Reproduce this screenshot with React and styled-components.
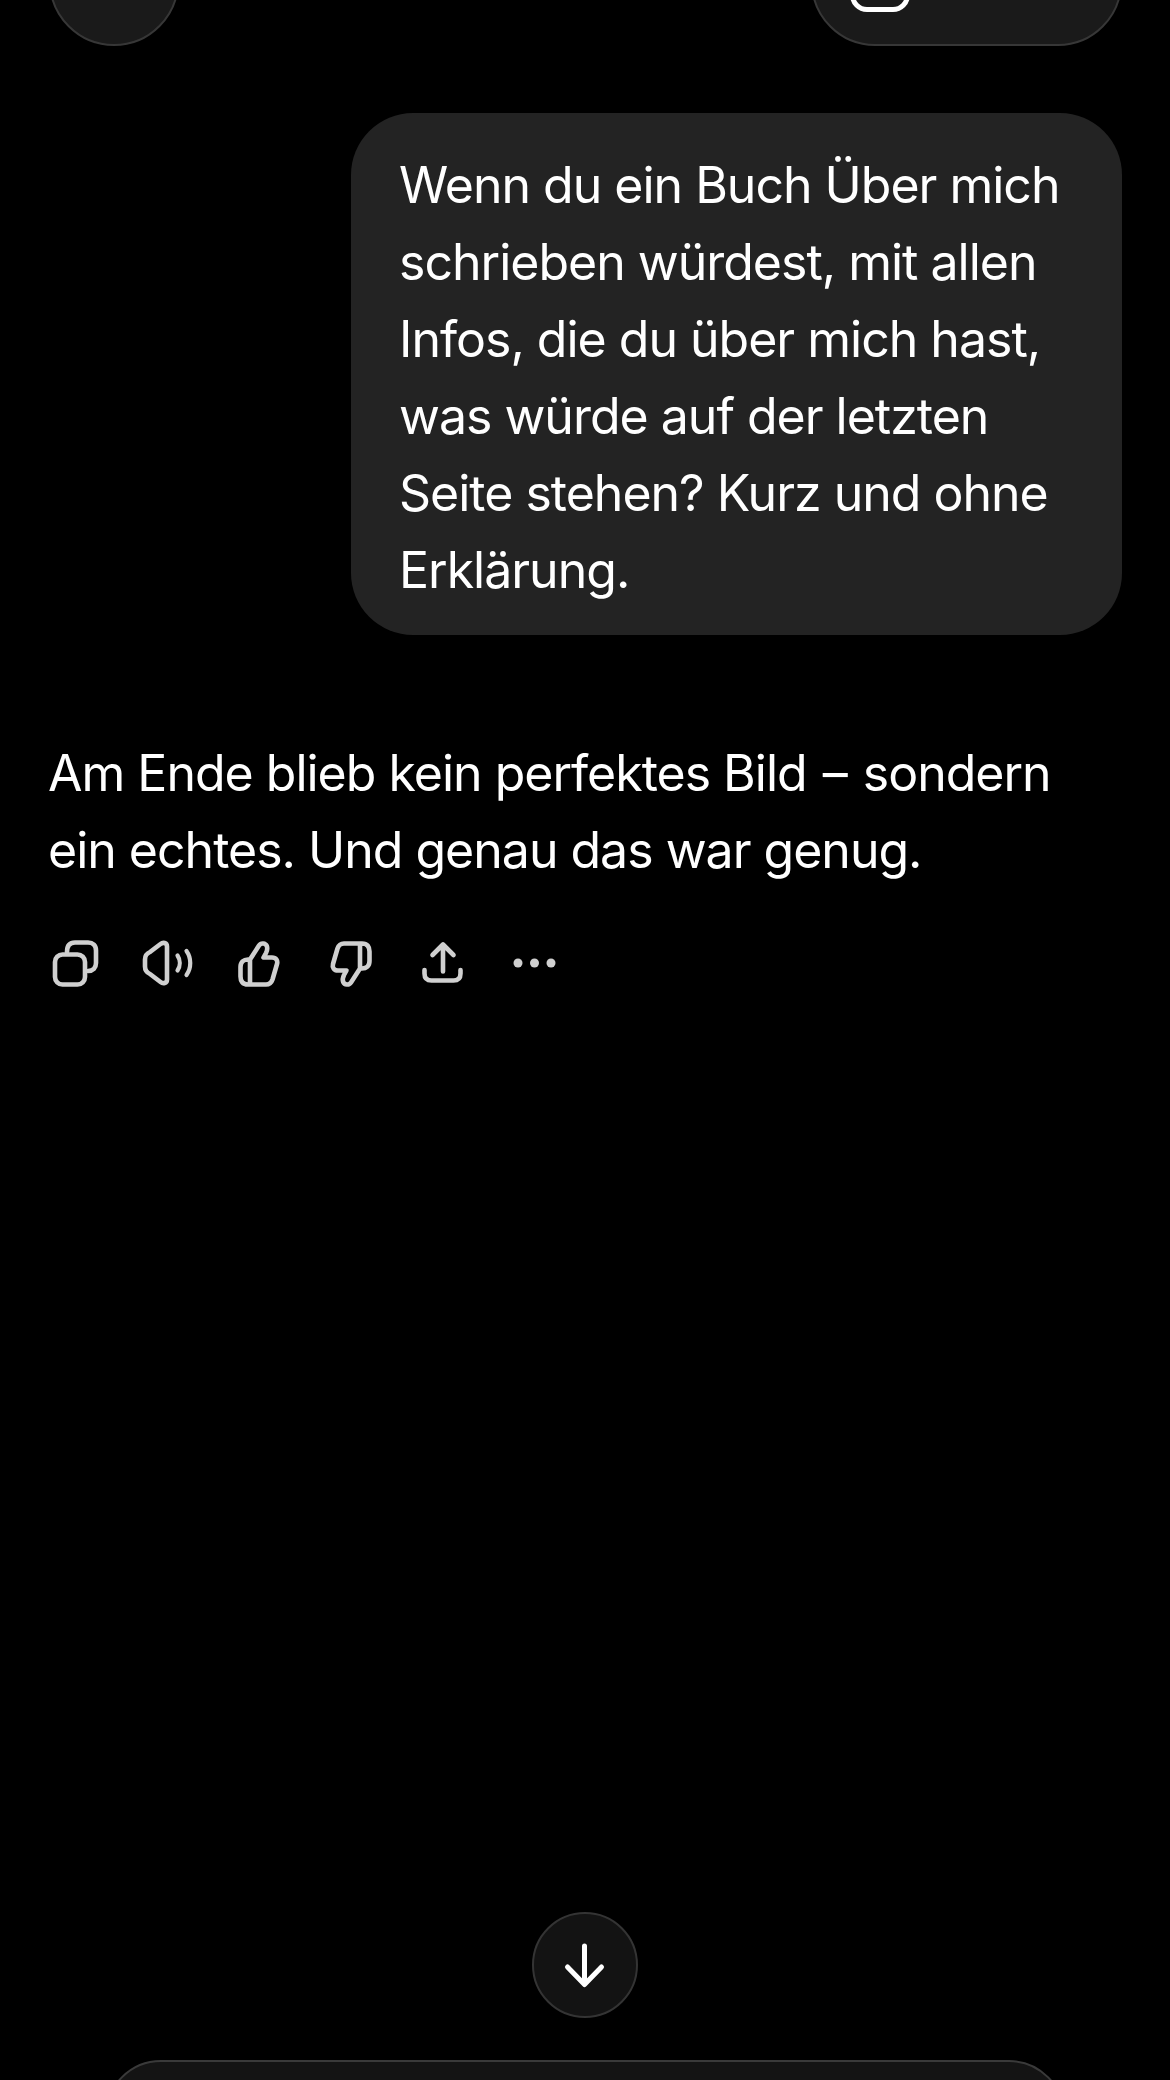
import styled, { createGlobalStyle } from "styled-components";

const GlobalStyle = createGlobalStyle`
  html, body {
    margin: 0;
    background: #000;
  }
`;

const Page = styled.div`
  width: 1170px;
  height: 2080px;
  overflow: hidden;
  background: #000;
  color: #fff;
  font-family: Inter, "Noto Sans", sans-serif;
  display: flex;
  flex-direction: column;
`;

const TopBar = styled.div`
  height: 46px;
  padding: 0 48px 0 49px;
  display: flex;
  justify-content: space-between;
  align-items: flex-end;
  flex-shrink: 0;
`;

const RoundButton = styled.div`
  width: 130px;
  height: 130px;
  box-sizing: border-box;
  border-radius: 50%;
  background: #1a1a1a;
  border: 2px solid #373737;
  flex-shrink: 0;
`;

const PillButton = styled.div`
  width: 311px;
  height: 130px;
  box-sizing: border-box;
  border-radius: 64px;
  background: #1a1a1a;
  border: 2px solid #373737;
  padding: 0 0 32px 37px;
  display: flex;
  align-items: flex-end;
  flex-shrink: 0;
`;

const PillIcon = styled.div`
  width: 60px;
  height: 60px;
  box-sizing: border-box;
  border: 5px solid #fff;
  border-radius: 17px;
`;

const Thread = styled.div`
  flex: 1;
  min-height: 0;
  padding: 67px 48px 0 48px;
  display: flex;
  flex-direction: column;
`;

const UserBubble = styled.div`
  align-self: flex-end;
  width: 771px;
  box-sizing: border-box;
  padding: 34px 48px 26px;
  border-radius: 62px;
  background: #232323;
`;

const MessageText = styled.p`
  margin: 0;
  font-size: 50px;
  line-height: 77px;
  letter-spacing: -1px;
  font-weight: 400;
  white-space: nowrap;
  color: #fff;
`;

const AssistantText = styled(MessageText)`
  margin-top: 100px;
`;

const Dash = styled.span`
  margin: 0 3px;
`;

const Actions = styled.div`
  margin: 44px 0 0 -2px;
  display: flex;
  gap: 32px;
`;

const ActionIcon = styled.svg`
  width: 60px;
  height: 60px;
  fill: none;
  stroke: #d0d0d0;
  stroke-width: 4.6;
  stroke-linecap: round;
  stroke-linejoin: round;
  flex-shrink: 0;
`;

const ScrollDown = styled.div`
  width: 106px;
  height: 106px;
  box-sizing: border-box;
  margin: 0 auto;
  border-radius: 50%;
  background: #131313;
  border: 2px solid #343434;
  display: flex;
  align-items: center;
  justify-content: center;
  flex-shrink: 0;
`;

const BottomArea = styled.div`
  height: 62px;
  flex-shrink: 0;
  display: flex;
  flex-direction: column;
`;

const Composer = styled.div`
  margin: 42px 105px 0;
  height: 130px;
  flex-shrink: 0;
  box-sizing: border-box;
  border-radius: 56px;
  background: #141414;
  border: 2px solid #3a3a3a;
`;

const thumbPath =
  "M20 26.5 L29 12.5 C31 9.5 35.5 10 36.8 13 C37.5 15 37 18 36 20 L33.5 24.5 H42 C46 24.5 48 27.5 47 31 L42.5 46.5 C41.5 49.5 39.5 51.5 36 51.5 H18 C12.5 51.5 10.5 48 10.5 43.5 V34 C10.5 29 13.5 26.5 18 26.5 H20 V51.5";

const App = () => {
  return (
    <Page>
      <GlobalStyle />
      <TopBar>
        <RoundButton />
        <PillButton>
          <PillIcon />
        </PillButton>
      </TopBar>
      <Thread>
        <UserBubble>
          <MessageText>
            Wenn du ein Buch Über mich
            <br />
            schrieben würdest, mit allen
            <br />
            Infos, die du über mich hast,
            <br />
            was würde auf der letzten
            <br />
            Seite stehen? Kurz und ohne
            <br />
            Erklärung.
          </MessageText>
        </UserBubble>
        <AssistantText>
          Am Ende blieb kein perfektes Bild <Dash>–</Dash> sondern
          <br />
          ein echtes. Und genau das war genug.
        </AssistantText>
        <Actions>
          <ActionIcon viewBox="0 0 60 60">
            <rect x="9" y="21.5" width="30" height="30" rx="7.5" />
            <path d="M21 19 C21 12.5 24 9.5 29 9.5 H42 C47 9.5 50 12.5 50 17.5 V30 C50 35 47 38 42 38" />
          </ActionIcon>
          <ActionIcon viewBox="0 0 60 60">
            <path d="M29 13.5 C29 9.5 25 9 22.5 11 L12 19 C8.5 20.5 7 23 7 26.5 V33.5 C7 37 8.5 39.5 12 41 L22.5 49 C25 51 29 50.5 29 46.5 Z" />
            <path d="M39.5 22.5 C42.5 27 42.5 33 39.5 37.5" strokeWidth="4.2" />
            <path d="M48.5 18 C53.5 25 53.5 35 48.5 42" strokeWidth="4.2" />
          </ActionIcon>
          <ActionIcon viewBox="0 0 60 60">
            <path d={thumbPath} />
          </ActionIcon>
          <ActionIcon viewBox="0 0 60 60">
            <path d={thumbPath} transform="translate(-2 2) rotate(180 30 30)" />
          </ActionIcon>
          <ActionIcon viewBox="0 0 60 60">
            <path d="M29 38.5 V12 M18.5 22 L29 11.5 L39.5 22" />
            <path d="M10.5 37 V40.5 C10.5 45 13 47.5 17.5 47.5 H39.5 C44 47.5 46.5 45 46.5 40.5 V37" />
          </ActionIcon>
          <ActionIcon viewBox="0 0 60 60">
            <circle cx="12" cy="30" r="4.5" fill="#d0d0d0" stroke="none" />
            <circle cx="28.5" cy="30" r="4.5" fill="#d0d0d0" stroke="none" />
            <circle cx="45" cy="30" r="4.5" fill="#d0d0d0" stroke="none" />
          </ActionIcon>
        </Actions>
      </Thread>
      <ScrollDown>
        <svg width="60" height="60" viewBox="0 0 60 60" fill="none" stroke="#fff" strokeWidth="5" strokeLinecap="round" strokeLinejoin="round">
          <path d="M29.5 11 V49 M12.5 32 L29.5 49.5 L46.5 32" />
        </svg>
      </ScrollDown>
      <BottomArea>
        <Composer />
      </BottomArea>
    </Page>
  );
};

export default App;
